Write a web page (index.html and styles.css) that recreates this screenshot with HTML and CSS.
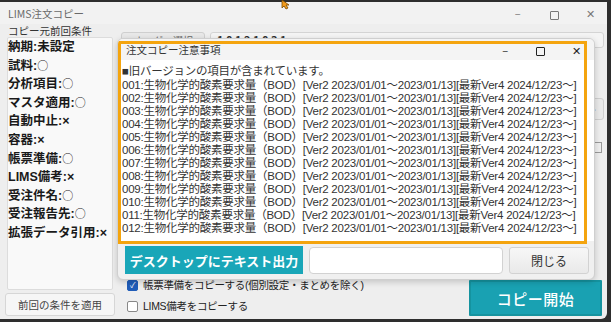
FILE: index.html
```html
<!DOCTYPE html>
<html lang="ja">
<head>
  <meta charset="UTF-8">
  <title>LIMS注文コピー</title>
  <link rel="stylesheet" href="styles.css">
</head>
<body>
  <div class="app">
    <!-- Barra de título de la ventana principal -->
    <header class="titlebar">
      <span class="titlebar__text">LIMS注文コピー</span>
      <div class="caption">
        <span class="caption__btn">&#8211;</span>
        <span class="caption__btn caption__btn--max"></span>
        <span class="caption__btn">&#10005;</span>
      </div>
    </header>

    <div class="app__body">
      <!-- Condiciones anteriores -->
      <aside class="prev">
        <div class="prev__label">コピー元前回条件</div>
        <div class="prev__box">
          <p>納期:未設定</p>
          <p>試料:<span class="mark">○</span></p>
          <p>分析項目:<span class="mark">○</span></p>
          <p>マスタ適用:<span class="mark">○</span></p>
          <p>自動中止:×</p>
          <p>容器:×</p>
          <p>帳票準備:<span class="mark">○</span></p>
          <p>LIMS備考:×</p>
          <p>受注件名:<span class="mark">○</span></p>
          <p>受注報告先:<span class="mark">○</span></p>
          <p>拡張データ引用:×</p>
        </div>
        <button class="prev__btn">前回の条件を適用</button>
      </aside>

      <main class="main">
        <div class="main__top">
          <button class="ghost-btn">オーダー選択</button>
          <div class="ghost-input">1 0 1 2 1 0 3 1</div>
        </div>
        <div class="main__mid">
          <button class="side-btn">ト</button>
          <span class="side-icon"></span>
        </div>
        <div class="main__bottom">
          <div class="checks">
            <label class="check"><span class="check__box check__box--on">&#10003;</span>帳票準備をコピーする(個別設定・まとめを除く)</label>
            <label class="check"><span class="check__box"></span>LIMS備考をコピーする</label>
          </div>
          <button class="start-btn">コピー開始</button>
        </div>
      </main>
    </div>

    <!-- Diálogo de aviso -->
    <div class="dialog">
      <div class="dialog__head">
        <span class="dialog__title">注文コピー注意事項</span>
        <div class="caption caption--dialog">
          <span class="caption__btn">&#8211;</span>
          <span class="caption__btn caption__btn--max"></span>
          <span class="caption__btn">&#10005;</span>
        </div>
      </div>
      <div class="dialog__text">
        <div class="dialog__line dialog__line--head">■旧バージョンの項目が含まれています。</div>
        <div class="dialog__line">001:生物化学的酸素要求量（BOD）[Ver2 2023/01/01～2023/01/13][最新Ver4 2024/12/23～]</div>
        <div class="dialog__line">002:生物化学的酸素要求量（BOD）[Ver2 2023/01/01～2023/01/13][最新Ver4 2024/12/23～]</div>
        <div class="dialog__line">003:生物化学的酸素要求量（BOD）[Ver2 2023/01/01～2023/01/13][最新Ver4 2024/12/23～]</div>
        <div class="dialog__line">004:生物化学的酸素要求量（BOD）[Ver2 2023/01/01～2023/01/13][最新Ver4 2024/12/23～]</div>
        <div class="dialog__line">005:生物化学的酸素要求量（BOD）[Ver2 2023/01/01～2023/01/13][最新Ver4 2024/12/23～]</div>
        <div class="dialog__line">006:生物化学的酸素要求量（BOD）[Ver2 2023/01/01～2023/01/13][最新Ver4 2024/12/23～]</div>
        <div class="dialog__line">007:生物化学的酸素要求量（BOD）[Ver2 2023/01/01～2023/01/13][最新Ver4 2024/12/23～]</div>
        <div class="dialog__line">008:生物化学的酸素要求量（BOD）[Ver2 2023/01/01～2023/01/13][最新Ver4 2024/12/23～]</div>
        <div class="dialog__line">009:生物化学的酸素要求量（BOD）[Ver2 2023/01/01～2023/01/13][最新Ver4 2024/12/23～]</div>
        <div class="dialog__line">010:生物化学的酸素要求量（BOD）[Ver2 2023/01/01～2023/01/13][最新Ver4 2024/12/23～]</div>
        <div class="dialog__line">011:生物化学的酸素要求量（BOD）[Ver2 2023/01/01～2023/01/13][最新Ver4 2024/12/23～]</div>
        <div class="dialog__line">012:生物化学的酸素要求量（BOD）[Ver2 2023/01/01～2023/01/13][最新Ver4 2024/12/23～]</div>
      </div>
      <div class="dialog__foot">
        <button class="export-btn">デスクトップにテキスト出力</button>
        <div class="path-input"></div>
        <button class="close-btn">閉じる</button>
      </div>
      <div class="highlight"></div>
    </div>

    <!-- Cursor -->
    <svg class="cursor" width="12" height="10" viewBox="0 0 12 10">
      <path d="M1 0 L1 8 L3 6 L5 9 L7 8 L5 5 L8 5 Z" fill="#f29b1d" stroke="#7a4a00" stroke-width="0.8"/>
    </svg>
  </div>
</body>
</html>
```

FILE: styles.css
```css
body {
  margin: 0;
  background-color: #2e2e2e;
  font-family: "Noto Sans CJK JP", "Noto Sans", sans-serif;
  width: 611px;
  height: 322px;
  overflow: hidden;
}
.app {
  position: relative;
  margin-top: 2px;
  width: 607px;
  height: 317px;
  background-color: #eeeeee;
  border-radius: 0 6px 6px 0;
  display: flex;
  flex-direction: column;
}
/* Barra de título */
.titlebar {
  height: 22px;
  display: flex;
  align-items: center;
  justify-content: space-between;
  padding-left: 8px;
  background-color: #f2f2f2;
}
.titlebar__text {
  font-size: 10.5px;
  color: #6a6a6a;
}
.caption {
  display: flex;
  align-items: center;
  margin-right: -2px;
}
.caption__btn {
  width: 36.5px;
  text-align: center;
  font-size: 11px;
  color: #777;
  line-height: 22px;
}
.caption__btn--max::before {
  content: "";
  display: inline-block;
  width: 7px;
  height: 7px;
  border: 1px solid #777;
  border-radius: 1px;
  vertical-align: middle;
}
.app__body {
  flex: 1;
  display: flex;
  gap: 6px;
  padding: 0 3px 3px 5px;
  min-height: 0;
}
/* Panel izquierdo */
.prev {
  width: 110px;
  display: flex;
  flex-direction: column;
}
.prev__label {
  font-size: 10.5px;
  color: #333;
  line-height: 13px;
  padding-left: 3px;
}
.prev__box {
  flex: 1;
  margin: 0 2px 0 2px;
  background-color: #f9f9f9;
  border: 1px solid #dcdcdc;
  border-radius: 2px;
  padding: 0;
}
.prev__box p {
  margin: 0;
  height: 18.6px;
  font-family: "Liberation Sans", "Noto Sans CJK JP", sans-serif;
  font-size: 12.5px;
  font-weight: 700;
  line-height: 18.6px;
  color: #1a1a1a;
  white-space: nowrap;
}
.prev__box .mark {
  font-family: "Noto Sans CJK JP", sans-serif;
  font-weight: 400;
  font-size: 11px;
  line-height: 0;
}
.prev__btn {
  margin-top: 3px;
  height: 23px;
  font-family: inherit;
  font-size: 10.5px;
  color: #444;
  background-color: #f6f6f6;
  border: 1px solid #d6d6d6;
  border-radius: 3px;
  padding: 0;
}
/* Zona principal */
.main {
  flex: 1;
  display: flex;
  flex-direction: column;
}
.main__top {
  display: flex;
  gap: 5px;
  margin-top: 8px;
  height: 16px;
}
.ghost-btn {
  width: 84px;
  font-family: inherit;
  font-size: 10px;
  color: #666;
  background-color: #e8e8e8;
  border: 1px solid #cfcfcf;
  border-radius: 3px;
  padding: 0;
}
.ghost-input {
  flex: 1;
  font-size: 11px;
  font-weight: 700;
  color: #333;
  background-color: #f4f4f4;
  border: 1px solid #d4d4d4;
  border-radius: 3px;
  padding-left: 6px;
  line-height: 14px;
}
.main__mid {
  flex: 1;
  display: flex;
  flex-direction: column;
  align-items: flex-end;
  gap: 22px;
  padding-top: 50px;
}
.side-btn {
  width: 40px;
  height: 22px;
  font-family: inherit;
  font-size: 11px;
  color: #555;
  background-color: #e9e9e9;
  border: 1px solid #cfcfcf;
  border-radius: 3px;
  text-align: right;
}
.side-icon {
  width: 7px;
  height: 9px;
  margin-right: 2px;
  border: 1px solid #999;
}
.main__bottom {
  display: flex;
  align-items: flex-end;
  justify-content: space-between;
}
.checks {
  display: flex;
  flex-direction: column;
  gap: 3px;
  padding-left: 6px;
  padding-bottom: 1px;
}
.check {
  display: flex;
  align-items: center;
  gap: 5px;
  font-family: "Liberation Sans", "Noto Sans CJK JP", sans-serif;
  font-size: 10.5px;
  letter-spacing: -0.3px;
  color: #222;
  line-height: 18px;
}
.check__box {
  width: 9px;
  height: 9px;
  border: 1px solid #888;
  border-radius: 2px;
  background-color: #fff;
  font-size: 8px;
  line-height: 9px;
  text-align: center;
  color: #fff;
}
.check__box--on {
  background-color: #1f5cb8;
  border-color: #1f5cb8;
}
.start-btn {
  width: 133px;
  height: 36px;
  margin-right: 2px;
  font-family: inherit;
  font-size: 15px;
  font-weight: 500;
  color: #fff;
  background-color: #19a1b2;
  border: 2px solid #15939f;
  border-radius: 1px;
  letter-spacing: 0.5px;
}
/* Diálogo */
.dialog {
  position: absolute;
  left: 117px;
  top: 36px;
  width: 476px;
  height: 240px;
  background-color: #f0f0f0;
  border: 1px solid #cfcfcf;
  border-radius: 6px;
  box-shadow: 0 2px 6px rgba(0, 0, 0, 0.18);
  display: flex;
  flex-direction: column;
  overflow: hidden;
}
.dialog__head {
  height: 21px;
  display: flex;
  align-items: center;
  justify-content: space-between;
  padding-left: 8px;
  background-color: #f4f4f4;
}
.dialog__title {
  font-size: 10.5px;
  color: #333;
}
.caption--dialog {
  margin-right: 0;
}
.caption--dialog .caption__btn {
  width: 35.5px;
  color: #222;
}
.caption--dialog .caption__btn--max::before {
  border-color: #222;
}
.dialog__text {
  height: 181px;
  margin: 0 0 0 3px;
  background-color: #fff;
  padding: 4px 0 0 1px;
  box-sizing: border-box;
}
.dialog__line {
  font-family: "Liberation Sans", "Noto Sans CJK JP", sans-serif;
  font-size: 11.5px;
  letter-spacing: -0.24px;
  line-height: 13px;
  color: #333;
  white-space: nowrap;
}
.dialog__line--head {
  line-height: 15px;
}
.dialog__foot {
  flex: 1;
  display: flex;
  align-items: center;
  gap: 6px;
  padding: 0 5px 0 7px;
}
.export-btn {
  width: 178px;
  height: 28px;
  font-family: inherit;
  font-size: 13px;
  font-weight: 700;
  color: #fff;
  background-color: #19a6b8;
  border: none;
  padding: 0;
  white-space: nowrap;
}
.path-input {
  flex: 1;
  height: 25px;
  background-color: #fff;
  border: 1px solid #d2d2d2;
  border-radius: 4px;
}
.close-btn {
  width: 80px;
  height: 27px;
  font-family: inherit;
  font-size: 12px;
  color: #333;
  background: linear-gradient(#f7f7f7, #e9e9e9);
  border: 1px solid #d2d2d2;
  border-radius: 3px;
}
/* Marco de resaltado naranja */
.highlight {
  position: absolute;
  left: 0;
  top: 2px;
  width: 469px;
  height: 203px;
  border: 3px solid #f4a40e;
  box-sizing: border-box;
  pointer-events: none;
}
.cursor {
  position: absolute;
  left: 281px;
  top: -2px;
}
```
